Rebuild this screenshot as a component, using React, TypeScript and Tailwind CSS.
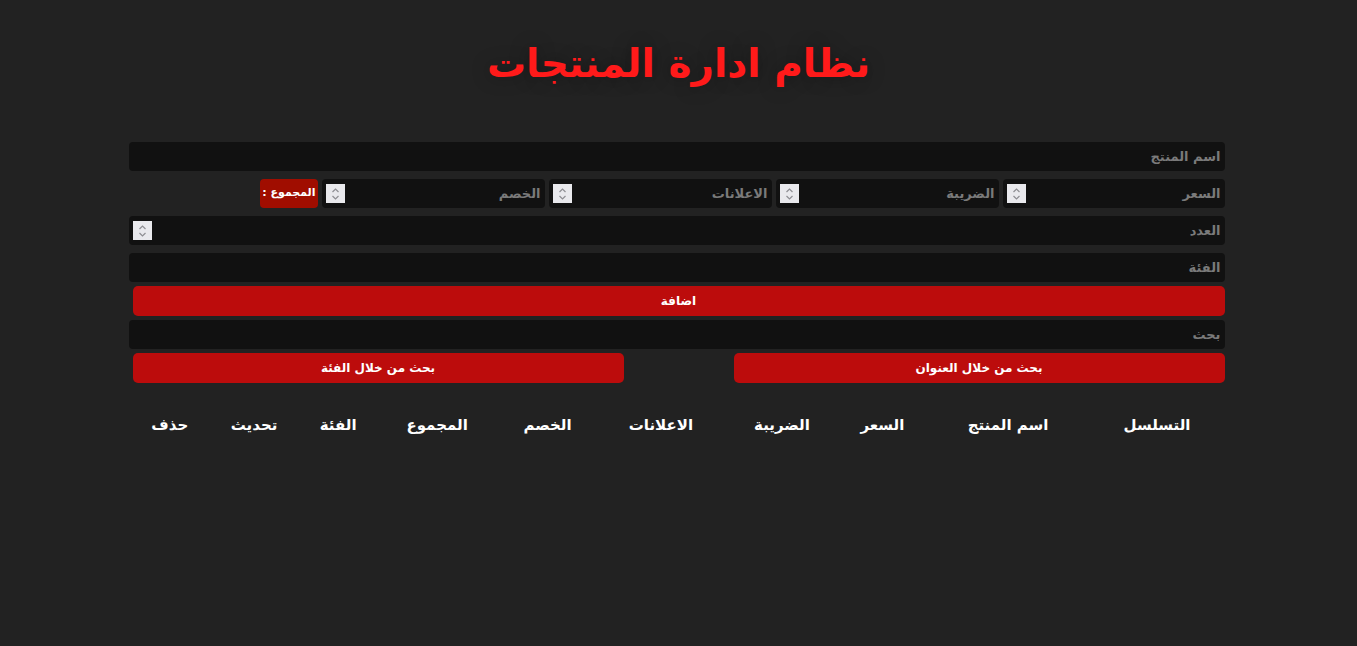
import React from "react";

const inputBase =
  "h-[29px] bg-[#111111] rounded-[4px] px-[4px] text-[13px] font-bold text-white placeholder:text-[#7a7a7a] outline-none border-none";

function Spinner() {
  return (
    <div className="absolute left-[4px] top-[5px] w-[19px] h-[19px] bg-[#e9e9ed] flex flex-col items-center justify-center">
      <svg width="9" height="14" viewBox="0 0 9 14" fill="none" stroke="#8e8e93" strokeWidth="1.2">
        <path d="M1.5 5 L4.5 2 L7.5 5" />
        <path d="M1.5 9 L4.5 12 L7.5 9" />
      </svg>
    </div>
  );
}

function NumInput({ placeholder, className }: { placeholder: string; className: string }) {
  return (
    <div className={"relative " + className}>
      <input type="text" placeholder={placeholder} className={inputBase + " w-full"} />
      <Spinner />
    </div>
  );
}

export default function App() {
  const headers = [
    "التسلسل",
    "اسم المنتج",
    "السعر",
    "الضريبة",
    "الاعلانات",
    "الخصم",
    "المجموع",
    "الفئة",
    "تحديث",
    "حذف",
  ];
  return (
    <div
      dir="rtl"
      className="min-h-[646px] w-full bg-[#222222] text-white"
      style={{ fontFamily: '"DejaVu Sans", "Noto Sans", sans-serif' }}
    >
      <div className="w-[1092px] mx-auto pt-[28px]">
        <div className="flex justify-center">
          <h1 className="text-[39px] font-bold text-[#ff1a1a] leading-[72px] [text-shadow:0_0_18px_rgba(0,0,0,0.35)]">
            نظام ادارة المنتجات
          </h1>
        </div>
        <div className="mt-[42px] flex flex-col items-start">
          <input placeholder="اسم المنتج" className={inputBase + " w-[1096px] shrink-0"} />
          <div className="flex gap-[4px] mt-[8px] w-[1092px]">
            <NumInput placeholder="السعر" className="w-[222px]" />
            <NumInput placeholder="الضريبة" className="w-[223px]" />
            <NumInput placeholder="الاعلانات" className="w-[223px]" />
            <NumInput placeholder="الخصم" className="w-[223px]" />
            <div className="h-[29px] px-[2px] bg-[#a00d00] rounded-[4px] flex items-center text-[11px] font-bold text-white">
              المجموع :
            </div>
          </div>
          <NumInput placeholder="العدد" className="w-[1096px] mt-[8px]" />
          <input placeholder="الفئة" className={inputBase + " w-[1096px] mt-[8px]"} />
          <button className="w-[1092px] h-[30px] mt-[4px] bg-[#bc0c0c] rounded-[5px] text-[12px] font-bold text-white">
            اضافة
          </button>
          <input placeholder="بحث" className={inputBase + " w-[1096px] mt-[4px]"} />
          <div className="flex justify-between w-[1092px] mt-[4px]">
            <button className="w-[491px] h-[30px] bg-[#bc0c0c] rounded-[5px] text-[12px] font-bold text-white">
              بحث من خلال العنوان
            </button>
            <button className="w-[491px] h-[30px] bg-[#bc0c0c] rounded-[5px] text-[12px] font-bold text-white">
              بحث من خلال الفئة
            </button>
          </div>
        </div>
        <table className="w-full mt-[27px] text-center">
          <thead>
            <tr>
              {headers.map((h) => (
                <th key={h} className="py-[4px] text-[15px] font-bold text-white">
                  {h}
                </th>
              ))}
            </tr>
          </thead>
        </table>
      </div>
    </div>
  );
}
